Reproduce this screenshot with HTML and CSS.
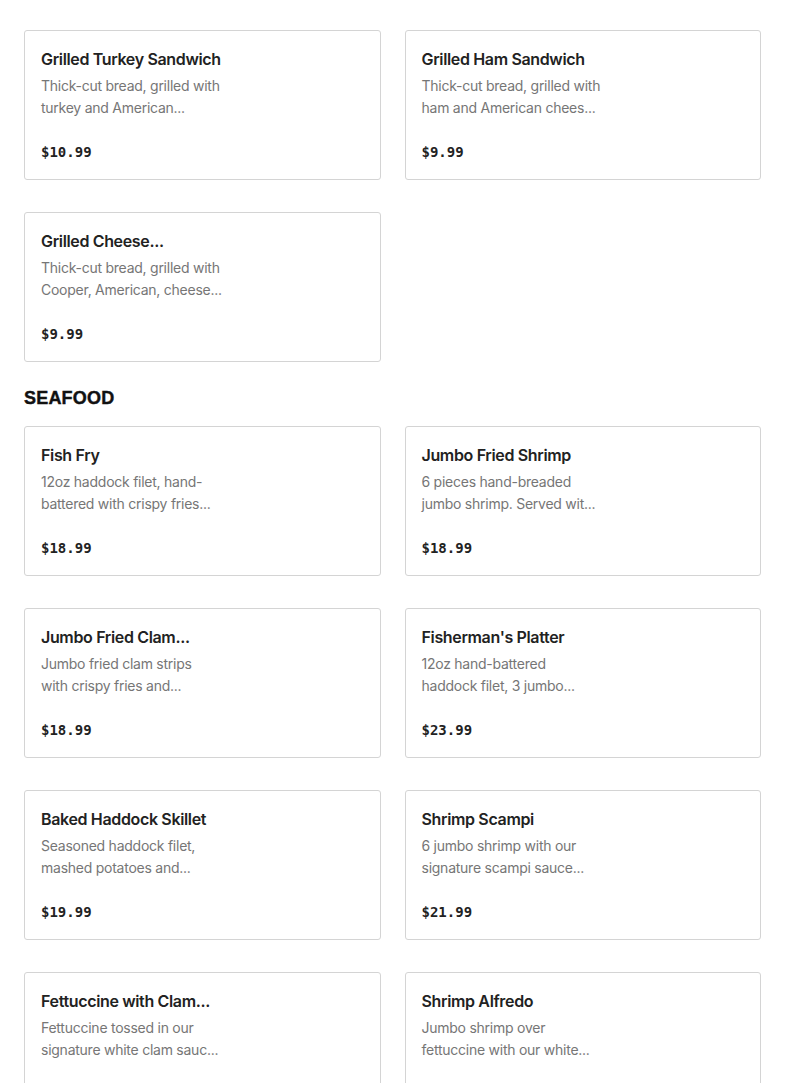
FILE: index.html
```html
<!DOCTYPE html>
<html>
<head>
<meta charset="utf-8">
<link rel="stylesheet" href="styles.css">
</head>
<body>
<main class="menu">
  <section class="section">
    <div class="grid">
      <article class="card">
        <h3 class="title">Grilled Turkey Sandwich</h3>
        <p class="desc">Thick-cut bread, grilled with<br>turkey and American...</p>
        <div class="price">$10.99</div>
      </article>
      <article class="card">
        <h3 class="title">Grilled Ham Sandwich</h3>
        <p class="desc">Thick-cut bread, grilled with<br>ham and American chees...</p>
        <div class="price">$9.99</div>
      </article>
      <article class="card">
        <h3 class="title">Grilled Cheese...</h3>
        <p class="desc">Thick-cut bread, grilled with<br>Cooper, American, cheese...</p>
        <div class="price">$9.99</div>
      </article>
    </div>
  </section>
  <section class="section">
    <h2 class="heading">SEAFOOD</h2>
    <div class="grid">
      <article class="card">
        <h3 class="title">Fish Fry</h3>
        <p class="desc">12oz haddock filet, hand-<br>battered with crispy fries...</p>
        <div class="price">$18.99</div>
      </article>
      <article class="card">
        <h3 class="title">Jumbo Fried Shrimp</h3>
        <p class="desc">6 pieces hand-breaded<br>jumbo shrimp. Served wit...</p>
        <div class="price">$18.99</div>
      </article>
      <article class="card">
        <h3 class="title">Jumbo Fried Clam...</h3>
        <p class="desc">Jumbo fried clam strips<br>with crispy fries and...</p>
        <div class="price">$18.99</div>
      </article>
      <article class="card">
        <h3 class="title">Fisherman's Platter</h3>
        <p class="desc">12oz hand-battered<br>haddock filet, 3 jumbo...</p>
        <div class="price">$23.99</div>
      </article>
      <article class="card">
        <h3 class="title">Baked Haddock Skillet</h3>
        <p class="desc">Seasoned haddock filet,<br>mashed potatoes and...</p>
        <div class="price">$19.99</div>
      </article>
      <article class="card">
        <h3 class="title">Shrimp Scampi</h3>
        <p class="desc">6 jumbo shrimp with our<br>signature scampi sauce...</p>
        <div class="price">$21.99</div>
      </article>
      <article class="card">
        <h3 class="title">Fettuccine with Clam...</h3>
        <p class="desc">Fettuccine tossed in our<br>signature white clam sauc...</p>
        <div class="price">$18.99</div>
      </article>
      <article class="card">
        <h3 class="title">Shrimp Alfredo</h3>
        <p class="desc">Jumbo shrimp over<br>fettuccine with our white...</p>
        <div class="price">$20.99</div>
      </article>
    </div>
  </section>
</main>
</body>
</html>
```
FILE: styles.css
```css
html, body {
  margin: 0;
  padding: 0;
  background: #fff;
}
body {
  font-family: Inter, "Noto Sans", sans-serif;
  color: #222;
}
.menu {
  padding: 30px 24px 0;
}
.section {
  margin-bottom: 24px;
}
.heading {
  margin: 0 0 16px;
  font-family: "Liberation Sans", Arial, sans-serif;
  font-weight: 900;
  font-size: 18px;
  line-height: 24px;
  letter-spacing: 0.2px;
  -webkit-text-stroke: 0.4px #111;
  color: #111;
}
.grid {
  display: grid;
  grid-template-columns: 1fr 1fr;
  column-gap: 24px;
  row-gap: 32px;
}
.card {
  border: 1px solid #d4d4d4;
  border-radius: 3px;
  padding: 16px;
  height: 150px;
  box-sizing: border-box;
  display: flex;
  flex-direction: column;
}
.title {
  margin: 0;
  font-size: 16px;
  font-weight: 600;
  line-height: 24px;
  letter-spacing: -0.35px;
  color: #222;
  white-space: nowrap;
}
.desc {
  margin: 4px 0 0;
  font-size: 14px;
  line-height: 22px;
  letter-spacing: -0.25px;
  color: #767676;
  white-space: nowrap;
}
.price {
  margin-top: auto;
  font-family: "DejaVu Sans Mono", "Liberation Mono", monospace;
  font-weight: 700;
  font-size: 14px;
  line-height: 22px;
  color: #222;
}
```
